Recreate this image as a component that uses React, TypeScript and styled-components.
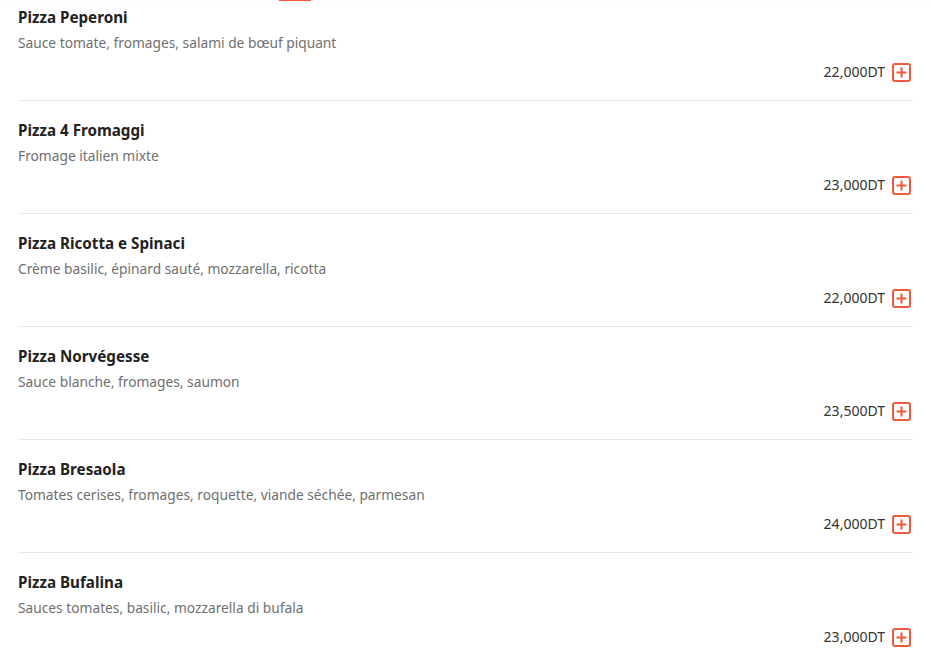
import React from 'react';
import styled, { createGlobalStyle } from 'styled-components';

const GlobalStyle = createGlobalStyle`
    html, body {
        margin: 0;
        padding: 0;
        background: #fff;
    }

    body {
        font-family: 'Noto Sans', 'Liberation Sans', sans-serif;
        overflow: hidden;
    }
`;

const Page = styled.div`
    height: 651px;
    overflow: hidden;
    position: relative;
    width: 932px;
`;

const TabBar = styled.div`
    background: #fff;
    box-shadow: 0 1px 6px rgba(0, 0, 0, 0.08);
    height: 1px;
    position: relative;
    z-index: 1;
`;

const ActiveTab = styled.div`
    background: #f05a33;
    height: 2px;
    margin-left: 279px;
    margin-top: -1px;
    width: 32px;
`;

const MenuList = styled.ul`
    list-style: none;
    margin: -12px 19px 0 18px;
    padding: 0;
`;

const MenuItem = styled.li`
    border-bottom: 1px solid #e8e8e8;
    padding: 19px 0 18px;
`;

const Title = styled.h3`
    color: #222;
    font-size: 15.2px;
    font-weight: 700;
    line-height: 20px;
    margin: 0;
`;

const Description = styled.p`
    color: #6f6f6f;
    font-size: 13.75px;
    line-height: 20px;
    margin: 6px 0 0;
`;

const PriceRow = styled.div`
    align-items: center;
    display: flex;
    gap: 7px;
    justify-content: flex-end;
    margin-top: 9px;
    padding-right: 2px;
`;

const Price = styled.span`
    color: #333;
    font-size: 14px;
    line-height: 20px;
`;

const AddButton = styled.button`
    align-items: center;
    background: #fff;
    border: 2px solid #ef5a3c;
    border-radius: 3px;
    box-sizing: border-box;
    cursor: pointer;
    display: flex;
    height: 19px;
    justify-content: center;
    padding: 0;
    width: 19px;
`;

const PlusIcon = () => (
    <svg width="11" height="11" viewBox="0 0 11 11">
        <path d="M5.5 0.5v10M0.5 5.5h10" stroke="#ef5a3c" strokeWidth="2" />
    </svg>
);

const PIZZAS = [
    { name: 'Pizza Peperoni', description: 'Sauce tomate, fromages, salami de bœuf piquant', price: '22,000DT' },
    { name: 'Pizza 4 Fromaggi', description: 'Fromage italien mixte', price: '23,000DT' },
    { name: 'Pizza Ricotta e Spinaci', description: 'Crème basilic, épinard sauté, mozzarella, ricotta', price: '22,000DT' },
    { name: 'Pizza Norvégesse', description: 'Sauce blanche, fromages, saumon', price: '23,500DT' },
    { name: 'Pizza Bresaola', description: 'Tomates cerises, fromages, roquette, viande séchée, parmesan', price: '24,000DT' },
    { name: 'Pizza Bufalina', description: 'Sauces tomates, basilic, mozzarella di bufala', price: '23,000DT' },
];

export default function App() {
    return (
        <Page>
            <GlobalStyle />
            <TabBar>
                <ActiveTab />
            </TabBar>
            <MenuList>
                {PIZZAS.map(pizza => (
                    <MenuItem key={pizza.name}>
                        <Title>{pizza.name}</Title>
                        <Description>{pizza.description}</Description>
                        <PriceRow>
                            <Price>{pizza.price}</Price>
                            <AddButton aria-label="Ajouter">
                                <PlusIcon />
                            </AddButton>
                        </PriceRow>
                    </MenuItem>
                ))}
            </MenuList>
        </Page>
    );
}
